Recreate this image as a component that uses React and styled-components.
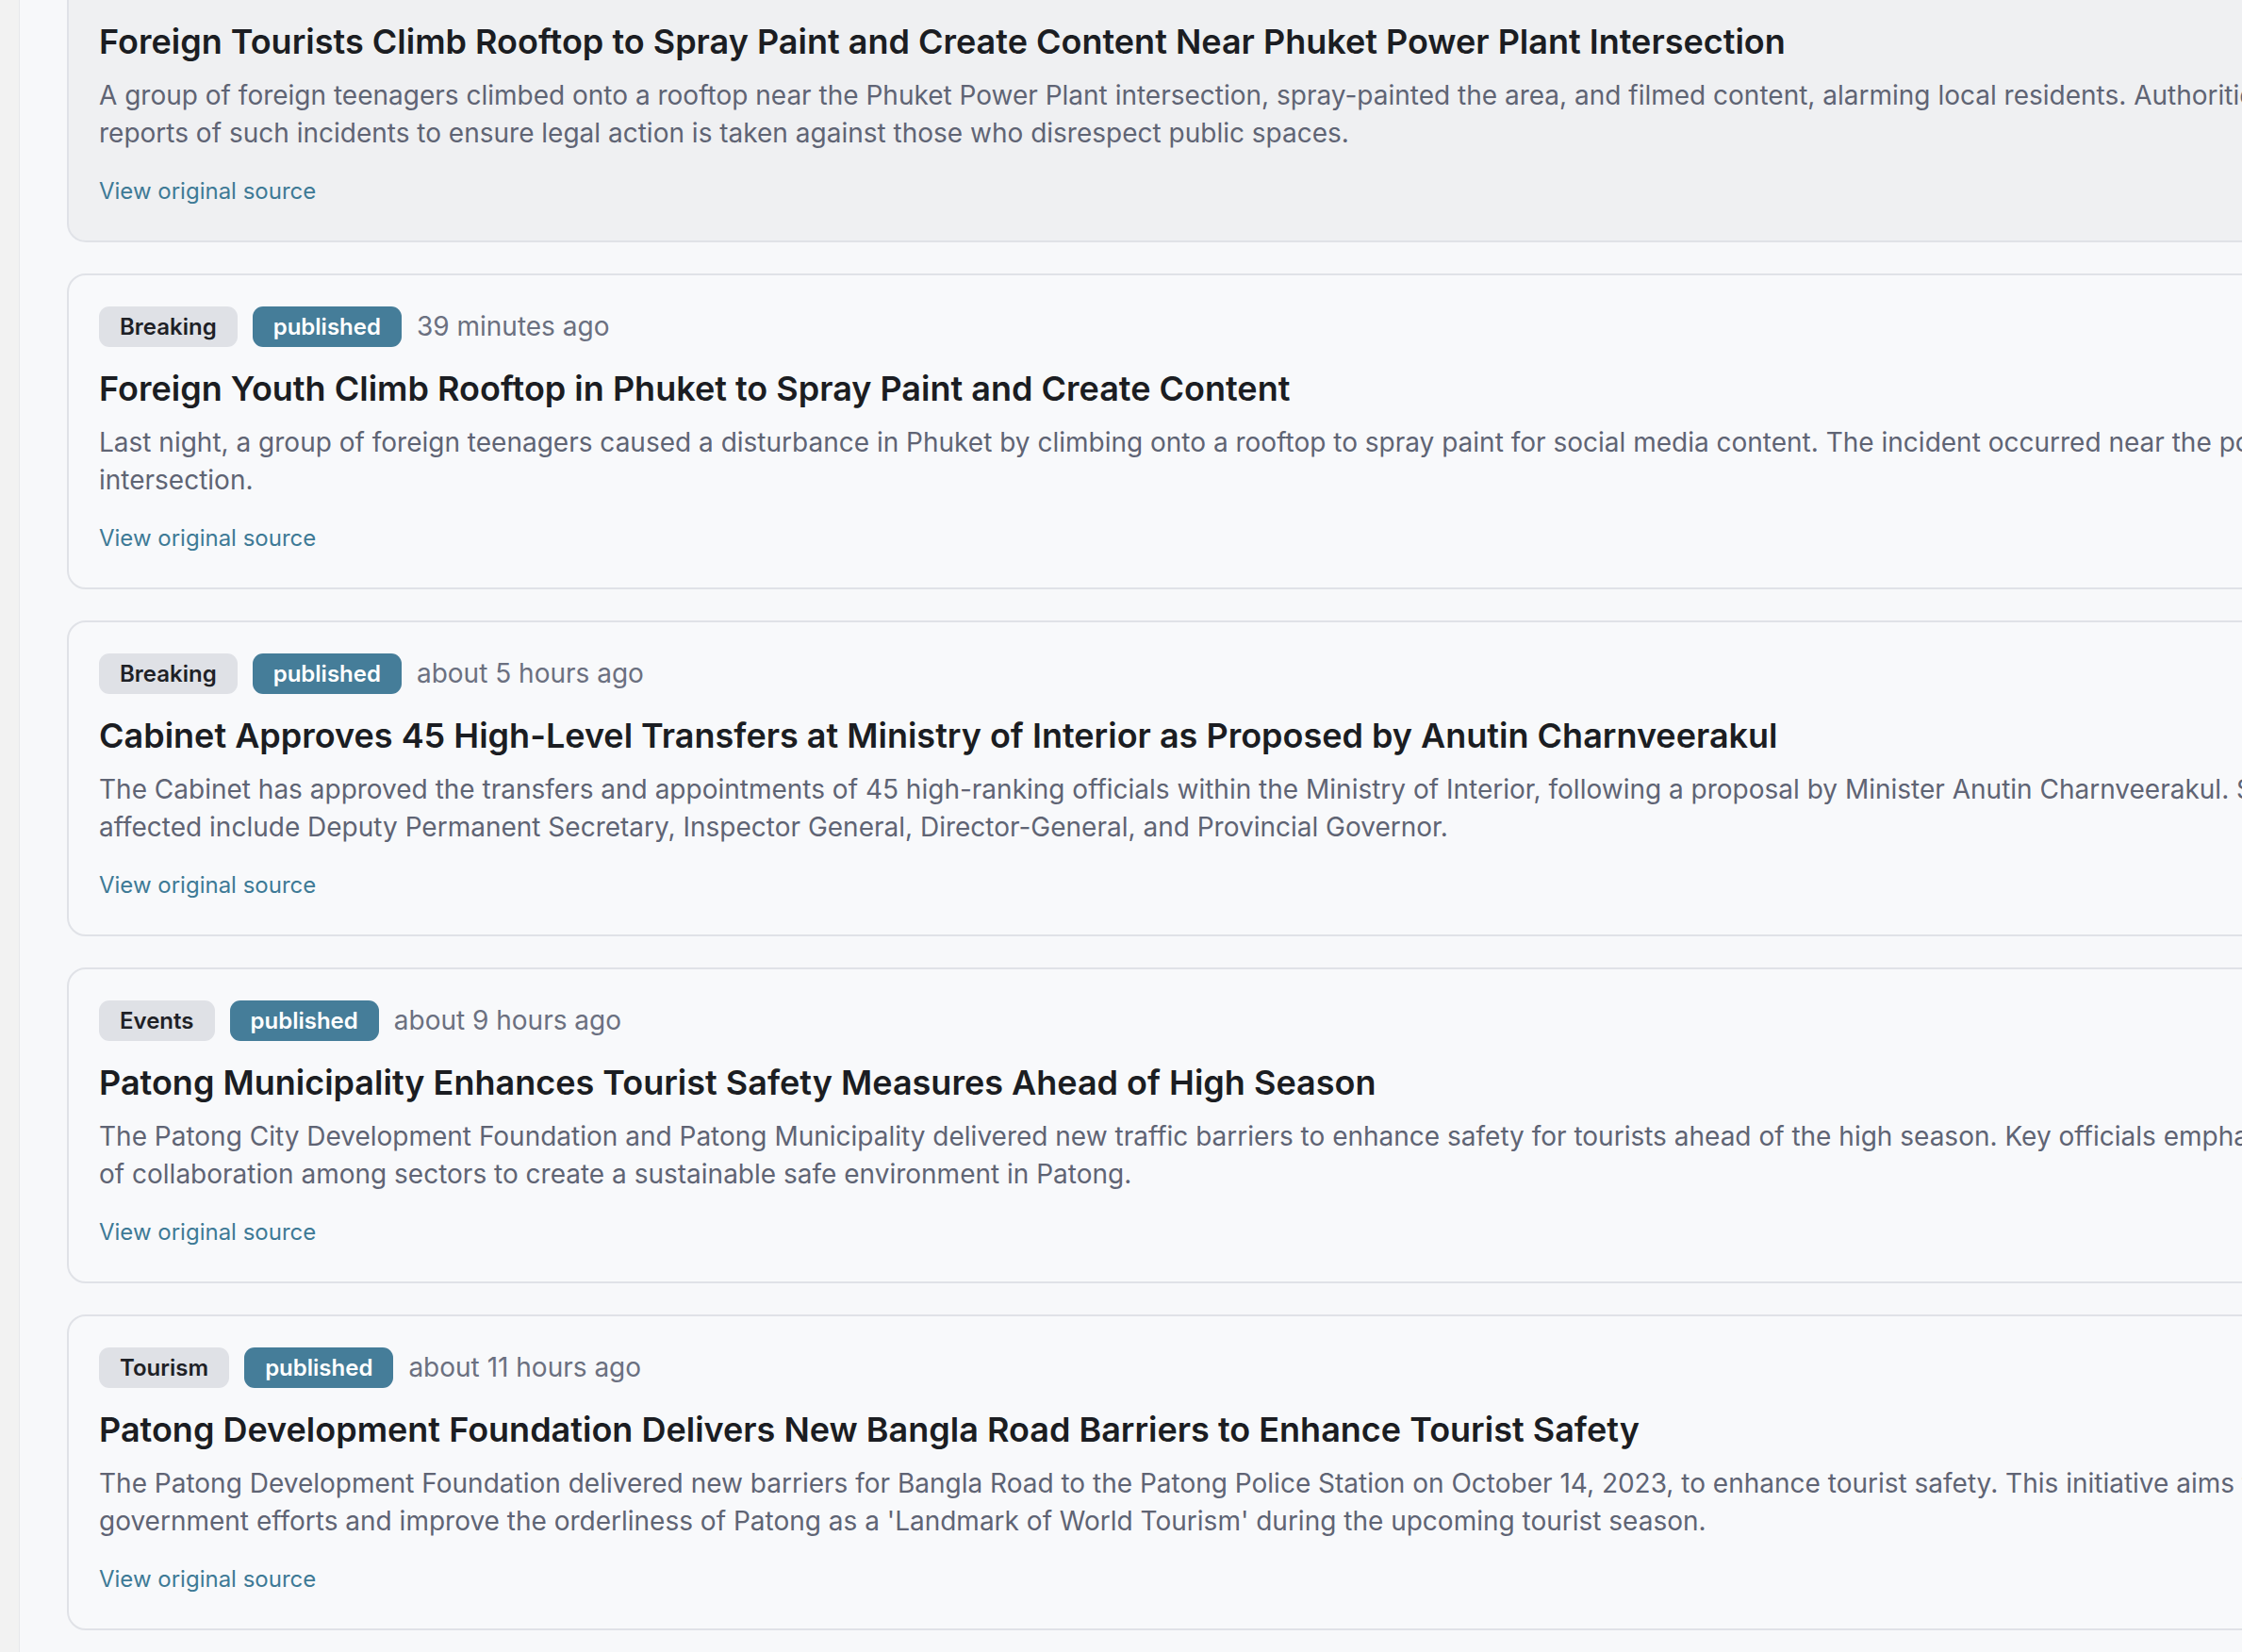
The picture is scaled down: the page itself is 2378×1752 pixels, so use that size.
import React from 'react';
import styled, { createGlobalStyle } from 'styled-components';

const GlobalStyle = createGlobalStyle`
  html, body {
    margin: 0;
    padding: 0;
    height: 100%;
    overflow: hidden;
    background: #f7f8fa;
  }
  body {
    font-family: Inter, "Noto Sans", "Liberation Sans", sans-serif;
    -webkit-font-smoothing: antialiased;
  }
  #root { height: 100%; }
`;

const Shell = styled.div`
  display: flex;
  height: 100vh;
  overflow: hidden;
`;

const Rail = styled.aside`
  flex: 0 0 20px;
  background: #f2f2f2;
  border-right: 1px solid #e7e8eb;
`;

const Main = styled.main`
  flex: 1;
  min-width: 0;
  overflow: hidden;
  padding-left: 50px;
  background: #f7f8fa;
`;

const Feed = styled.div`
  display: flex;
  flex-direction: column;
  gap: 33px;
  width: 3000px;
  margin-top: -78px;
`;

const Card = styled.article`
  display: flex;
  flex-direction: column;
  align-items: flex-start;
  padding: 32px 32px 34px;
  border: 2px solid #e0e2e7;
  border-radius: 20px;
  background: ${(p) => (p.$active ? '#eff0f2' : '#f8f9fb')};
`;

const MetaRow = styled.div`
  display: flex;
  align-items: center;
  gap: 16px;
  height: 44px;
`;

const Badge = styled.span`
  display: inline-flex;
  align-items: center;
  height: 43px;
  padding: 0 22px;
  border-radius: 11px;
  font-size: 24px;
  font-weight: 600;
  background: ${(p) => (p.$tone === 'status' ? '#457d99' : '#dfe1e6')};
  color: ${(p) => (p.$tone === 'status' ? '#ffffff' : '#1e2126')};
`;

const Time = styled.span`
  font-size: 28px;
  color: #6b7080;
`;

const Title = styled.h2`
  margin: 20px 0 0;
  font-size: 36px;
  line-height: 49px;
  font-weight: 600;
  color: #1b1d22;
  white-space: nowrap;
`;

const Summary = styled.p`
  margin: 12px 0 0;
  font-size: 28px;
  line-height: 40px;
  color: #5f6474;
  white-space: pre;
`;

const SourceLink = styled.a`
  margin-top: 24px;
  font-size: 24px;
  line-height: 36px;
  color: #3e7a96;
  text-decoration: none;
`;

const stories = [
  {
    category: 'Safety',
    time: 'about 1 hour ago',
    title: 'Foreign Tourists Climb Rooftop to Spray Paint and Create Content Near Phuket Power Plant Intersection',
    summary:
      'A group of foreign teenagers climbed onto a rooftop near the Phuket Power Plant intersection, spray-painted the area, and filmed content, alarming local residents. Authorities urge the public to submit\nreports of such incidents to ensure legal action is taken against those who disrespect public spaces.',
    active: true,
  },
  {
    category: 'Breaking',
    time: '39 minutes ago',
    title: 'Foreign Youth Climb Rooftop in Phuket to Spray Paint and Create Content',
    summary:
      'Last night, a group of foreign teenagers caused a disturbance in Phuket by climbing onto a rooftop to spray paint for social media content. The incident occurred near the power plant\nintersection.',
  },
  {
    category: 'Breaking',
    time: 'about 5 hours ago',
    title: 'Cabinet Approves 45 High-Level Transfers at Ministry of Interior as Proposed by Anutin Charnveerakul',
    summary:
      'The Cabinet has approved the transfers and appointments of 45 high-ranking officials within the Ministry of Interior, following a proposal by Minister Anutin Charnveerakul. Some of the positions\naffected include Deputy Permanent Secretary, Inspector General, Director-General, and Provincial Governor.',
  },
  {
    category: 'Events',
    time: 'about 9 hours ago',
    title: 'Patong Municipality Enhances Tourist Safety Measures Ahead of High Season',
    summary:
      'The Patong City Development Foundation and Patong Municipality delivered new traffic barriers to enhance safety for tourists ahead of the high season. Key officials emphasized the importance\nof collaboration among sectors to create a sustainable safe environment in Patong.',
  },
  {
    category: 'Tourism',
    time: 'about 11 hours ago',
    title: 'Patong Development Foundation Delivers New Bangla Road Barriers to Enhance Tourist Safety',
    summary:
      "The Patong Development Foundation delivered new barriers for Bangla Road to the Patong Police Station on October 14, 2023, to enhance tourist safety. This initiative aims to support\ngovernment efforts and improve the orderliness of Patong as a 'Landmark of World Tourism' during the upcoming tourist season.",
  },
];

export default function App() {
  return (
    <>
      <GlobalStyle />
      <Shell>
        <Rail />
        <Main>
          <Feed>
            {stories.map((s, i) => (
              <Card key={i} $active={s.active}>
                <MetaRow>
                  <Badge>{s.category}</Badge>
                  <Badge $tone="status">published</Badge>
                  <Time>{s.time}</Time>
                </MetaRow>
                <Title>{s.title}</Title>
                <Summary>{s.summary}</Summary>
                <SourceLink href="#">View original source</SourceLink>
              </Card>
            ))}
          </Feed>
        </Main>
      </Shell>
    </>
  );
}
